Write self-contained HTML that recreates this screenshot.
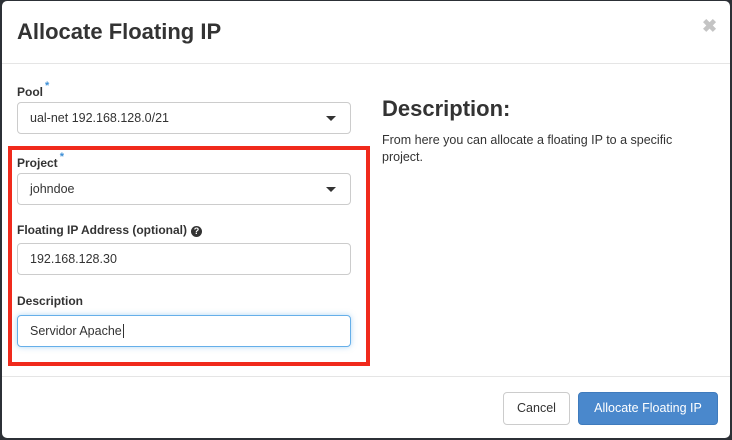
<!DOCTYPE html>
<html><head><style>
*{box-sizing:border-box;margin:0;padding:0}
body{width:732px;height:440px;background:#2c3036;font-family:"Liberation Sans",Arial,sans-serif;color:#333;position:relative;overflow:hidden}
.dlg{position:absolute;left:2px;top:1px;width:728px;height:437px;background:#fff;border-radius:5px}
.title{position:absolute;left:15px;top:18px;font-size:22px;font-weight:bold;color:#333}
.x{position:absolute;left:700px;top:15px;font-size:18px;color:#c4c4c4;font-weight:bold}
.hr{position:absolute;left:0;right:0;height:1px;background:#e5e5e5}
label{position:absolute;left:15px;font-size:12px;font-weight:bold;color:#333}
label sup{color:#3e8fd6;font-size:11px;position:relative;top:-2px;margin-left:2px}
.f{position:absolute;left:15px;width:334px;height:32px;border:1px solid #ccc;border-radius:4px;font-size:12.5px;padding:0 12px;line-height:30px;color:#333}
.f.s:after{content:"";position:absolute;right:14px;top:13px;border-left:5px solid transparent;border-right:5px solid transparent;border-top:5px solid #333}
.f.focus{border-color:#66afe9;box-shadow:0 0 6px rgba(102,175,233,.5)}
.red{position:absolute;left:6px;top:145px;width:362px;height:220px;border:4px solid #f02a1c}
.q{display:inline-block;width:11px;height:11px;border-radius:50%;background:#333;color:#fff;font-size:9px;text-align:center;line-height:11px;margin-left:4px;vertical-align:0}
.btn{position:absolute;top:391px;height:33px;border-radius:4px;font-size:12.5px;line-height:31px;text-align:center}
</style></head><body>
<div class="dlg">
<div class="title">Allocate Floating IP</div>
<div class="x">✖</div>
<div class="hr" style="top:62px"></div>
<label style="top:81px">Pool<sup>*</sup></label>
<div class="f s" style="top:101px">ual-net 192.168.128.0/21</div>
<div class="red"></div>
<label style="top:152px">Project<sup>*</sup></label>
<div class="f s" style="top:172px">johndoe</div>
<label style="top:222px">Floating IP Address (optional)<span class="q">?</span></label>
<div class="f" style="top:242px">192.168.128.30</div>
<label style="top:293px">Description</label>
<div class="f focus" style="top:314px">Servidor Apache<span style="border-left:1px solid #333;margin-left:1px"></span></div>
<div style="position:absolute;left:380px;top:95px;font-size:22px;font-weight:bold;color:#333">Description:</div>
<div style="position:absolute;left:380px;top:131px;font-size:12.5px;line-height:17px;width:330px">From here you can allocate a floating IP to a specific project.</div>
<div class="hr" style="top:375px"></div>
<div class="btn" style="left:501px;width:67px;border:1px solid #ccc;color:#333">Cancel</div>
<div class="btn" style="left:576px;width:140px;background:#4a88cc;border:1px solid #3f7bbd;color:#fff">Allocate Floating IP</div>
</div>
</body></html>
